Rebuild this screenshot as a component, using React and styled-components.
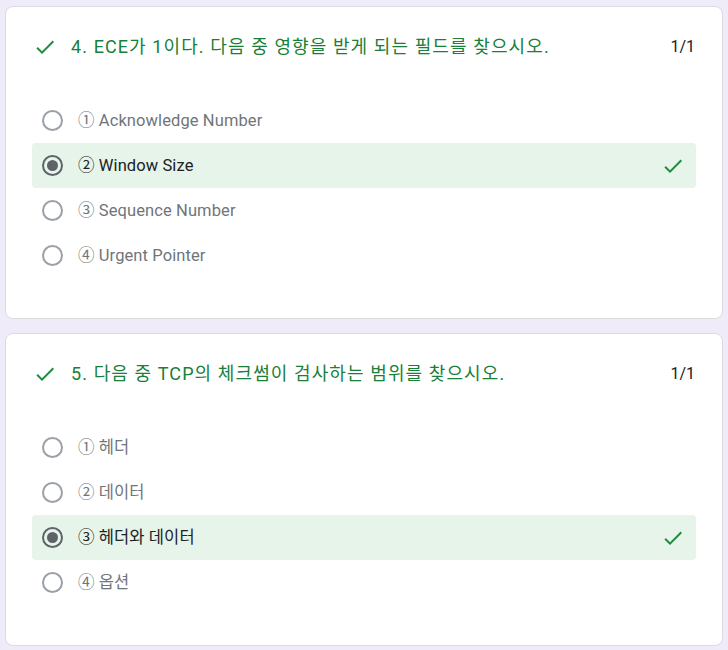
import React from 'react';
import styled, { createGlobalStyle } from 'styled-components';

const GlobalStyle = createGlobalStyle`
  body {
    margin: 0;
    background: #f0ebf8;
    font-family: Roboto, "Noto Sans CJK KR", "Liberation Sans", sans-serif;
  }
`;

const Page = styled.div`
  display: flex;
  flex-direction: column;
  gap: 14px;
  padding: 6px 5px 5px;
`;

const Card = styled.section`
  background: #fff;
  border: 1px solid #dadce0;
  border-radius: 8px;
  padding: 28px 26px 40px;
`;

const Header = styled.div`
  display: flex;
  align-items: center;
  height: 24px;
  margin-bottom: 39px;
`;

const TitleIcon = styled.span`
  display: flex;
  width: 24px;
  margin: 0 14px 0 1px;
`;

const Title = styled.div`
  flex: 1;
  color: #188038;
  font-size: 18px;
  line-height: 24px;
  letter-spacing: 1.1px;
`;

const Points = styled.div`
  color: #202124;
  font-size: 16px;
  line-height: 24px;
  margin-right: 1px;
`;

const OptionList = styled.ul`
  list-style: none;
  margin: 0;
  padding: 0;
`;

const Option = styled.li`
  display: flex;
  align-items: center;
  height: 45px;
  padding: 0 11px 0 10px;
  border-radius: 4px;
  background: ${(p) => (p.correct ? '#e6f4ea' : 'transparent')};
`;

const Radio = styled.span`
  box-sizing: border-box;
  width: 21px;
  height: 21px;
  border-radius: 50%;
  border: 2px solid ${(p) => (p.checked ? '#5f6368' : '#9aa0a6')};
  display: flex;
  align-items: center;
  justify-content: center;
  margin-right: 15px;
  &::after {
    content: '';
    display: ${(p) => (p.checked ? 'block' : 'none')};
    width: 11px;
    height: 11px;
    border-radius: 50%;
    background: #5f6368;
  }
`;

const Label = styled.span`
  flex: 1;
  font-size: 16.5px;
  line-height: 20px;
  letter-spacing: 0.1px;
  color: ${(p) => (p.checked ? '#202124' : '#70757a')};
`;

const Check = () => (
  <svg width="24" height="24" viewBox="0 0 24 24" fill="#1e8e3e">
    <path d="M9 16.17L4.83 12l-1.42 1.41L9 19 21 7l-1.41-1.41z" />
  </svg>
);

const questions = [
  {
    title: '4. ECE가 1이다. 다음 중 영향을 받게 되는 필드를 찾으시오.',
    options: ['① Acknowledge Number', '② Window Size', '③ Sequence Number', '④ Urgent Pointer'],
    answer: 1,
  },
  {
    title: '5. 다음 중 TCP의 체크썸이 검사하는 범위를 찾으시오.',
    options: ['① 헤더', '② 데이터', '③ 헤더와 데이터', '④ 옵션'],
    answer: 2,
  },
];

const App = () => (
  <>
    <GlobalStyle />
    <Page>
      {questions.map((q) => (
        <Card key={q.title}>
          <Header>
            <TitleIcon><Check /></TitleIcon>
            <Title>{q.title}</Title>
            <Points>1/1</Points>
          </Header>
          <OptionList>
            {q.options.map((opt, i) => (
              <Option key={opt} correct={i === q.answer}>
                <Radio checked={i === q.answer} />
                <Label checked={i === q.answer}>{opt}</Label>
                {i === q.answer && <Check />}
              </Option>
            ))}
          </OptionList>
        </Card>
      ))}
    </Page>
  </>
);

export default App;
